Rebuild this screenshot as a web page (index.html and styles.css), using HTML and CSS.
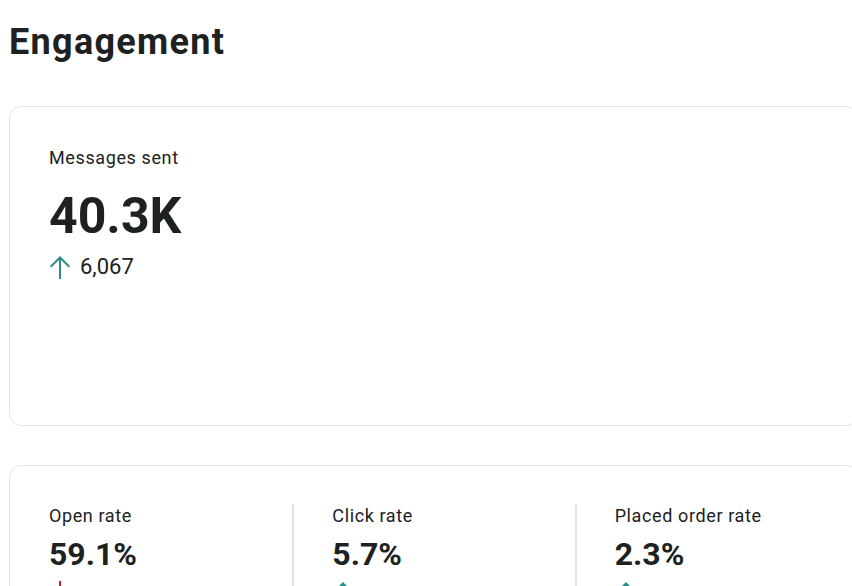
FILE: index.html
```html
<!DOCTYPE html>
<html lang="en">
<head>
    <meta charset="UTF-8">
    <meta name="viewport" content="width=device-width, initial-scale=1.0">
    <title>Engagement</title>
    <link rel="stylesheet" href="styles.css">
</head>
<body>
    <div class="page">
        <h1 class="title">Engagement</h1>

        <div class="card card-main">
            <div class="label">Messages sent</div>
            <div class="big-value">40.3K</div>
            <div class="delta">
                <svg class="arrow up" width="22" height="24" viewBox="0 0 22 24">
                    <path d="M11 2.5V24M1.7 11.8L11 2.5l9.3 9.3" fill="none" stroke="currentColor" stroke-width="2"/>
                </svg>
                <span>6,067</span>
            </div>
        </div>

        <div class="card card-rates">
            <div class="rate">
                <div class="label">Open rate</div>
                <div class="value">59.1%</div>
                <div class="delta small">
                    <svg class="arrow down" width="22" height="24" viewBox="0 0 22 24">
                        <path d="M11 0v21.5M1.7 12.2l9.3 9.3 9.3-9.3" fill="none" stroke="currentColor" stroke-width="2"/>
                    </svg>
                    <span>2.1%</span>
                </div>
            </div>
            <div class="rate">
                <div class="label">Click rate</div>
                <div class="value">5.7%</div>
                <div class="delta small">
                    <svg class="arrow up" width="22" height="24" viewBox="0 0 22 24">
                        <path d="M11 2.5V24M1.7 11.8L11 2.5l9.3 9.3" fill="none" stroke="currentColor" stroke-width="2"/>
                    </svg>
                    <span>0.4%</span>
                </div>
            </div>
            <div class="rate">
                <div class="label">Placed order rate</div>
                <div class="value">2.3%</div>
                <div class="delta small">
                    <svg class="arrow up" width="22" height="24" viewBox="0 0 22 24">
                        <path d="M11 2.5V24M1.7 11.8L11 2.5l9.3 9.3" fill="none" stroke="currentColor" stroke-width="2"/>
                    </svg>
                    <span>0.2%</span>
                </div>
            </div>
        </div>
    </div>
</body>
</html>
```

FILE: styles.css
```css
html, body {
    margin: 0;
    padding: 0;
    overflow: hidden;
    background: #fff;
}
body {
    font-family: Roboto, "Liberation Sans", sans-serif;
    color: #1d2122;
}
.page {
    width: 849px;
    padding: 21px 0 0 9px;
}
.title {
    margin: 0 0 42px;
    font-size: 36px;
    line-height: 43px;
    font-weight: 700;
    letter-spacing: 0.036em;
}
.card {
    box-sizing: border-box;
    border: 1px solid #e4e4e4;
    border-radius: 12px;
    background: #fff;
}
.card-main {
    height: 320px;
    padding: 39px 39px;
    margin-bottom: 39px;
}
.label {
    font-size: 18px;
    line-height: 24px;
    letter-spacing: 0.034em;
}
.big-value {
    margin-top: 16px;
    font-size: 50px;
    line-height: 60px;
    font-weight: 700;
}
.delta {
    display: flex;
    align-items: center;
    gap: 9px;
    margin-top: 7px;
    font-size: 22px;
    line-height: 28px;
}
.arrow {
    display: block;
}
.arrow.up {
    color: #2a8d86;
}
.arrow.down {
    color: #c81e2b;
}
.card-rates {
    display: grid;
    grid-template-columns: repeat(3, 1fr);
    padding: 38px 0;
}
.rate {
    padding: 0 39px;
}
.rate + .rate {
    border-left: 2px solid #e4e4e4;
    padding-left: 38px;
}
.value {
    margin-top: 6px;
    font-size: 32px;
    line-height: 40px;
    font-weight: 700;
}
.delta.small {
    margin-top: 5px;
    font-size: 18px;
}
```
